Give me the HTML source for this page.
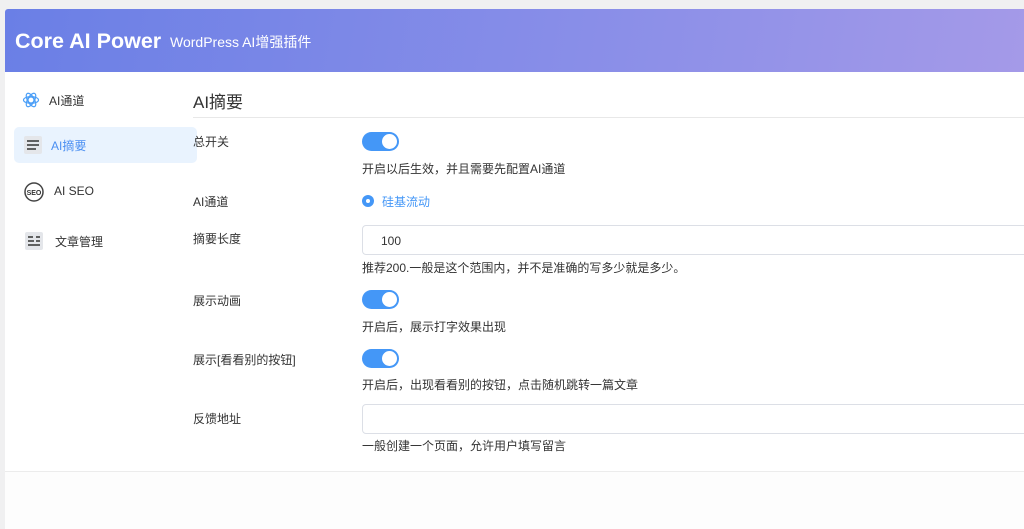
<!DOCTYPE html>
<html><head><meta charset="utf-8"><style>
*{margin:0;padding:0;box-sizing:border-box}
body{width:1024px;height:518px;background:#f0f0f1;font-family:"Liberation Sans","Noto Sans CJK SC",sans-serif;overflow:hidden;position:relative;color:#333}
.card{position:absolute;left:5px;top:9px;width:1030px;height:520px;background:#fff;border-radius:3px 0 0 0;overflow:hidden}
.hd{height:63px;background:linear-gradient(100deg,#6a7fe6 0%,#8b8fe8 60%,#a59ae8 100%);position:relative}
.hd .t{position:absolute;left:10px;top:20px;color:#fff;font-weight:bold;font-size:21.5px}
.hd .s{position:absolute;left:165px;top:23px;color:#fff;font-size:14px}
.abs{position:absolute}
.nav{font-size:12px;color:#333}
.act{left:9px;top:118px;width:183px;height:36px;background:#e9f3fe;border-radius:5px}
.lbl{position:absolute;left:188px;font-size:12px;color:#333}
.hint{position:absolute;left:357px;font-size:12px;color:#333}
.sw{position:absolute;left:357px;width:37px;height:19px;background:#4497f7;border-radius:10px}
.sw:after{content:"";position:absolute;right:2px;top:2px;width:15px;height:15px;border-radius:50%;background:#fff}
.inp{position:absolute;left:357px;width:700px;height:30px;border:1px solid #dcdfe6;border-radius:4px;font-size:12px;padding:8px 18px;color:#333}
</style></head><body>
<div class="card">
<div class="hd"><div class="t">Core AI Power</div><div class="s">WordPress AI增强插件</div></div>
<svg class="abs" style="left:17px;top:82px" width="18" height="18" viewBox="0 0 24 24" fill="none" stroke="#4a9ef7" stroke-width="1.6"><circle cx="12" cy="12" r="4"/><ellipse cx="12" cy="12" rx="10" ry="4.5"/><ellipse cx="12" cy="12" rx="10" ry="4.5" transform="rotate(60 12 12)"/><ellipse cx="12" cy="12" rx="10" ry="4.5" transform="rotate(120 12 12)"/></svg>
<div class="abs nav" style="left:44px;top:83px">AI通道</div>
<div class="abs act"></div>
<svg class="abs" style="left:19px;top:127px" width="18" height="18" viewBox="0 0 18 18"><rect width="18" height="18" rx="2" fill="#e4e6ea"/><path d="M3 5h12M3 9h12M3 13h9" stroke="#333" stroke-width="1.6"/></svg>
<div class="abs nav" style="left:46px;top:128px;color:#4a8ff2">AI摘要</div>
<svg class="abs" style="left:19px;top:173px" width="20" height="20" viewBox="0 0 20 20"><circle cx="10" cy="10" r="9" fill="none" stroke="#444" stroke-width="1.5"/><text x="10" y="13" font-size="7" text-anchor="middle" font-weight="bold" fill="#333" font-family="Liberation Sans">SEO</text></svg>
<div class="abs nav" style="left:49px;top:175px">AI SEO</div>
<svg class="abs" style="left:20px;top:223px" width="18" height="18" viewBox="0 0 18 18"><rect width="18" height="18" rx="2" fill="#e4e6ea"/><path d="M3 5h5M11 5h4M3 9h6M11 9h4M3 13h12" stroke="#333" stroke-width="1.6"/></svg>
<div class="abs nav" style="left:50px;top:224px">文章管理</div>
<div class="abs" style="left:188px;top:79px;font-size:17px;color:#333">AI摘要</div>
<div class="abs" style="left:188px;top:108px;width:900px;height:1px;background:#e8e8e8"></div>
<div class="lbl" style="top:124px">总开关</div>
<div class="sw" style="top:123px"></div>
<div class="hint" style="top:151px">开启以后生效，并且需要先配置AI通道</div>
<div class="lbl" style="top:184px">AI通道</div>
<div class="abs" style="left:357px;top:186px;width:12px;height:12px;border-radius:50%;background:#4497f7"><div style="position:absolute;left:4px;top:4px;width:4px;height:4px;border-radius:50%;background:#fff"></div></div>
<div class="abs" style="left:377px;top:184px;font-size:12px;color:#4497f7">硅基流动</div>
<div class="lbl" style="top:221px">摘要长度</div>
<div class="inp" style="top:216px">100</div>
<div class="hint" style="top:250px">推荐200.一般是这个范围内，并不是准确的写多少就是多少。</div>
<div class="lbl" style="top:283px">展示动画</div>
<div class="sw" style="top:281px"></div>
<div class="hint" style="top:309px">开启后，展示打字效果出现</div>
<div class="lbl" style="top:342px">展示[看看别的按钮]</div>
<div class="sw" style="top:340px"></div>
<div class="hint" style="top:367px">开启后，出现看看别的按钮，点击随机跳转一篇文章</div>
<div class="lbl" style="top:401px">反馈地址</div>
<div class="inp" style="top:395px"></div>
<div class="hint" style="top:428px">一般创建一个页面，允许用户填写留言</div>
<div class="abs" style="left:0;top:462px;width:1030px;height:1px;background:#ececec"></div>
<div class="abs" style="left:0;top:463px;width:1030px;height:60px;background:#fdfdfd"></div>
</div>
</body></html>
